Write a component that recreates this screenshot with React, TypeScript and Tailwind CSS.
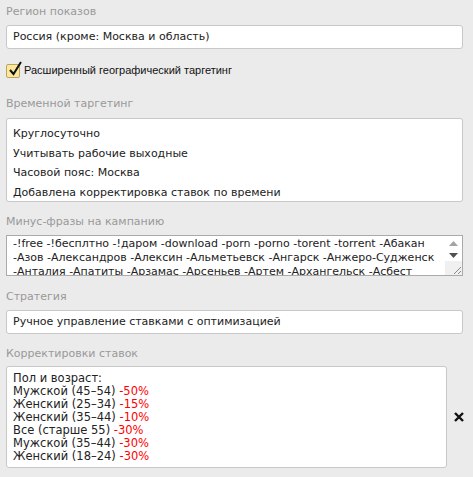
import React from 'react'

const font = { fontFamily: '"DejaVu Sans", Verdana, sans-serif' }

function Label({ children }: { children: React.ReactNode }) {
  return <div className="text-[11px] leading-[16px] text-[#999999]">{children}</div>
}

const minus =
  '-!free -!бесплтно -!даром -download -porn -porno -torent -torrent -Абакан -Азов -Александров -Алексин -Альметьевск -Ангарск -Анжеро-Судженск -Анталия -Апатиты -Арзамас -Арсеньев -Артем -Архангельск -Асбест -Астрахань -Балаково -Барнаул -Батайск'

const corrections = [
  ['Мужской (45–54)', '-50%'],
  ['Женский (25–34)', '-15%'],
  ['Женский (35–44)', '-10%'],
  ['Все (старше 55)', '-30%'],
  ['Мужской (35–44)', '-30%'],
  ['Женский (18–24)', '-30%'],
]

export default function App() {
  return (
    <div className="w-[473px] h-[477px] bg-[#ebebeb] px-[6px] pt-[4px] text-[#222]" style={font}>
      {/* Регион */}
      <Label>Регион показов</Label>
      <div className="mt-[5px] w-[457px] h-[24px] bg-white border border-[#c8c8c8] rounded-[3px] px-[6px] flex items-center text-[11px]">
        Россия (кроме: Москва и область)
      </div>

      <div className="mt-[12px] flex items-center gap-[4px] h-[18px]">
        <div className="relative w-[14px] h-[14px] mt-[2px] bg-[#fbe89a] border border-[#b9a660] rounded-[2px]">
          <svg className="absolute left-[1px] -top-[4px]" width="15" height="16" viewBox="0 0 15 16">
            <path d="M2 9 L5.5 13 L13 1" fill="none" stroke="#111" strokeWidth="2" />
          </svg>
        </div>
        <span className="text-[11px] text-[#111]" style={{ fontFamily: '"Liberation Sans", Arial, sans-serif' }}>
          Расширенный географический таргетинг
        </span>
      </div>

      {/* Временной */}
      <div className="mt-[17px]">
        <Label>Временной таргетинг</Label>
      </div>
      <div className="mt-[6px] w-[457px] h-[84px] bg-white border border-[#c8c8c8] rounded-[3px] px-[6px] pt-[5px] text-[11px] leading-[19.5px]">
        <div>Круглосуточно</div>
        <div>Учитывать рабочие выходные</div>
        <div>Часовой пояс: Москва</div>
        <div>Добавлена корректировка ставок по времени</div>
      </div>

      {/* Минус-фразы */}
      <div className="mt-[12px]">
        <Label>Минус-фразы на кампанию</Label>
      </div>
      <div className="mt-[5px] w-[457px] h-[41px] bg-white border border-[#aaaaaa] flex overflow-hidden">
        <div className="flex-1 pl-[6px] pt-[1px] text-[11px] leading-[14px] overflow-hidden">{minus}</div>
        <div className="w-[17px] flex flex-col items-center">
          <div className="h-[12px] flex items-center justify-center mt-[1px]">
            <svg width="9" height="5" viewBox="0 0 9 5"><path d="M0 5 L4.5 0 L9 5Z" fill="#a3a3a3" /></svg>
          </div>
          <div className="h-[12px] flex items-center justify-center">
            <svg width="9" height="5" viewBox="0 0 9 5"><path d="M0 0 L4.5 5 L9 0Z" fill="#505050" /></svg>
          </div>
          <div className="flex-1 w-full bg-[#f0f0f0] flex items-end justify-end">
            <svg width="10" height="10" viewBox="0 0 10 10">
              <path d="M9 2 L2 9 M9 6 L6 9" stroke="#888" strokeWidth="1" />
            </svg>
          </div>
        </div>
      </div>

      {/* Стратегия */}
      <div className="mt-[13px]">
        <Label>Стратегия</Label>
      </div>
      <div className="mt-[5px] w-[457px] h-[24px] bg-white border border-[#c8c8c8] rounded-[3px] px-[6px] flex items-center text-[11px]">
        Ручное управление ставками с оптимизацией
      </div>

      {/* Корректировки */}
      <div className="mt-[12px]">
        <Label>Корректировки ставок</Label>
      </div>
      <div className="mt-[4px] flex items-center">
        <div className="w-[441px] h-[102px] bg-white border border-[#c8c8c8] rounded-[3px] px-[6px] pt-[5px] text-[11.5px] leading-[13px]">
          <div>Пол и возраст:</div>
          {corrections.map(([name, value]) => (
            <div key={name + value}>
              {name} <span className="text-[#ff0000]">{value}</span>
            </div>
          ))}
        </div>
        <svg className="ml-[7px]" width="10" height="10" viewBox="0 0 10 10">
          <path d="M1 1 L9 9 M9 1 L1 9" stroke="#111" strokeWidth="2.4" />
        </svg>
      </div>
    </div>
  )
}
